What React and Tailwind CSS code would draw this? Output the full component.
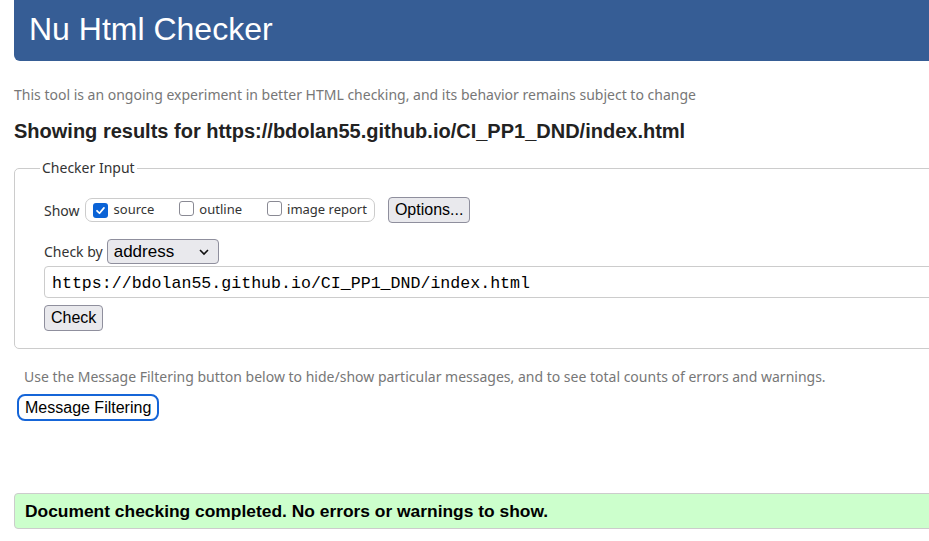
import React from "react";

function Box({ checked }) {
  if (checked) {
    return (
      <span className="inline-flex h-[15px] w-[15px] items-center justify-center rounded-[3px] bg-[#0b63d6]">
        <svg width="11" height="11" viewBox="0 0 12 12">
          <path d="M2.2 6.3 L4.9 9 L9.8 3.2" fill="none" stroke="white" strokeWidth="1.9" strokeLinecap="round" strokeLinejoin="round" />
        </svg>
      </span>
    );
  }
  return <span className="inline-block h-[15px] w-[15px] rounded-[3px] border-[1.5px] border-[#8a8a94] bg-white" />;
}

export default function App() {
  return (
    <div className="h-[541px] w-[929px] overflow-hidden bg-white text-[#222]">
      <div className="ml-[14px] flex h-[61px] w-[1000px] items-center rounded-bl-[6px] bg-[#365d95] pb-[4px] pl-[15px]">
        <h1 className="font-['Liberation_Sans',Arial,sans-serif] text-[32px] leading-none text-white">Nu Html Checker</h1>
      </div>

      <p className="ml-[14px] mt-[25px] font-['Noto_Sans','Open_Sans',sans-serif] text-[14px] leading-[18px] text-[#777]">
        This tool is an ongoing experiment in better HTML checking, and its behavior remains subject to change
      </p>

      <h2 className="ml-[14px] mt-[16px] font-['Liberation_Sans',Arial,sans-serif] text-[20px] font-bold leading-[22px] text-[#222]">
        Showing results for https://bdolan55.github.io/CI_PP1_DND/index.html
      </h2>

      <fieldset className="ml-[14px] mt-[17px] h-[190px] w-[1000px] rounded-[5px] border border-[#ccc] px-[29px] pt-[10px]">
        <legend className="-ml-[4px] px-[2px] font-['Noto_Sans','Open_Sans',sans-serif] text-[14px] leading-[18px] text-[#333]">Checker Input</legend>

        <div className="mt-[10px] flex items-center font-['Noto_Sans','Open_Sans',sans-serif] text-[14px] text-[#333]">
          <span>Show</span>
          <div className="ml-[5px] flex h-[24px] items-center rounded-[7px] border border-[#ccc] px-[7px]">
            <Box checked />
            <span className="ml-[6px] text-[13px]">source</span>
            <span className="ml-[25px]"><Box /></span>
            <span className="ml-[5px] text-[13px]">outline</span>
            <span className="ml-[25px]"><Box /></span>
            <span className="ml-[5px] text-[13px]">image report</span>
          </div>
          <button className="ml-[13px] h-[26px] rounded-[4px] border border-[#8f8f9d] bg-[#e9e9ed] px-[6px] font-['Liberation_Sans',Arial,sans-serif] text-[16px] text-black">
            Options...
          </button>
        </div>

        <div className="mt-[16px] flex items-center font-['Noto_Sans','Open_Sans',sans-serif] text-[14px] text-[#333]">
          <span>Check by</span>
          <div className="ml-[4px] flex h-[25px] w-[112px] items-center justify-between rounded-[4px] border border-[#8f8f9d] bg-[#e9e9ed] pl-[6px] pr-[8px] font-['Liberation_Sans',Arial,sans-serif] text-[17px] text-black">
            <span>address</span>
            <svg width="12" height="8" viewBox="0 0 12 8">
              <path d="M2 2 L6 6 L10 2" fill="none" stroke="#111" strokeWidth="1.6" />
            </svg>
          </div>
        </div>

        <div className="mt-[2px] flex h-[32px] w-[1000px] items-center rounded-[4px] border border-[#ccc] pl-[7px] pt-[4px] font-['Liberation_Mono','DejaVu_Sans_Mono',monospace] text-[16.6px] text-black">
          https://bdolan55.github.io/CI_PP1_DND/index.html
        </div>

        <button className="mt-[7px] h-[26px] rounded-[4px] border border-[#8f8f9d] bg-[#e9e9ed] px-[6px] font-['Liberation_Sans',Arial,sans-serif] text-[16px] text-black">
          Check
        </button>
      </fieldset>

      <p className="ml-[24px] mt-[19px] font-['Noto_Sans','Open_Sans',sans-serif] text-[14px] leading-[18px] text-[#777]">
        Use the Message Filtering button below to hide/show particular messages, and to see total counts of errors and warnings.
      </p>

      <button className="ml-[17px] mt-[8px] h-[27px] rounded-[8px] border-2 border-[#1565d8] bg-white px-[6px] font-['Liberation_Sans',Arial,sans-serif] text-[16px] text-black">
        Message Filtering
      </button>

      <div className="ml-[14px] mt-[72px] flex h-[36px] w-[1000px] items-center rounded-[4px] border border-[#ccc] bg-[#ccffcc] pl-[10px] font-['Liberation_Sans',Arial,sans-serif] text-[17.4px] font-bold text-black">
        Document checking completed. No errors or warnings to show.
      </div>
    </div>
  );
}
